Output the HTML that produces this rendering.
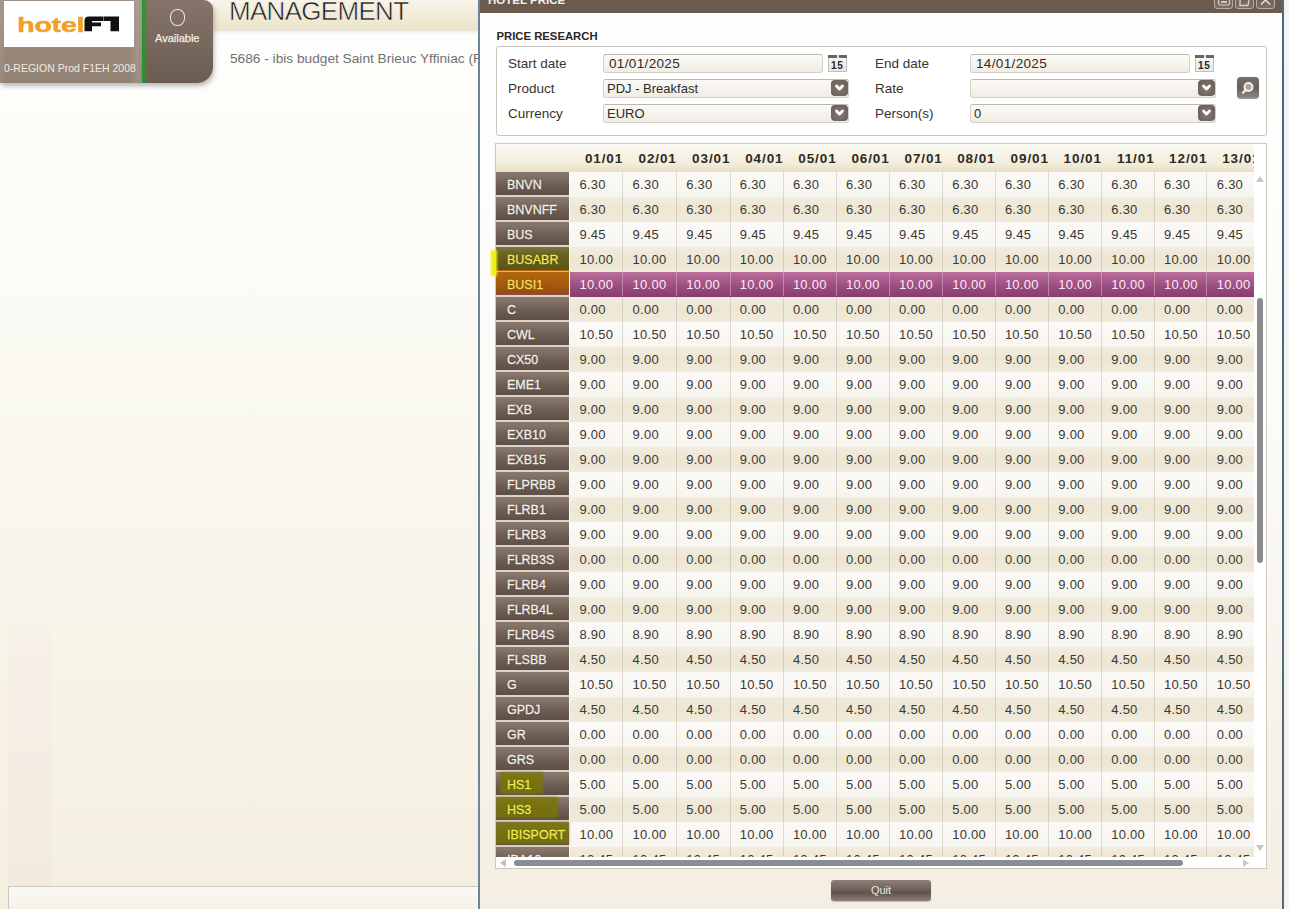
<!DOCTYPE html><html><head><meta charset="utf-8"><style>
*{margin:0;padding:0;box-sizing:border-box}
html,body{width:1289px;height:909px;overflow:hidden}
body{position:relative;font-family:"Liberation Sans",sans-serif;background:linear-gradient(#fefefd 0px,#fbfaf4 300px,#f4efdf 909px);}
.a{position:absolute}
.t{position:absolute;white-space:nowrap;line-height:1}
</style></head><body><div class="a" style="left:213px;top:0;width:266px;height:29px;background:linear-gradient(#f7f4ea,#ece4c9);box-shadow:0 2px 4px rgba(120,100,60,.25)"></div><div class="t" style="left:229px;top:-2px;font-size:26px;color:#1e1b18;letter-spacing:-0.7px;-webkit-text-stroke:0.55px #f4f0e2;font-weight:normal">MANAGEMENT</div><div class="t" style="left:230px;top:51.5px;font-size:13.7px;color:#737170">5686 - ibis budget Saint Brieuc Yffiniac (F</div><div class="a" style="left:0;top:0;width:213px;height:83px;box-shadow:1px 3px 5px rgba(0,0,0,.28);border-radius:0 9px 16px 0"></div><div class="a" style="left:0;top:0;width:142px;height:83px;background:linear-gradient(#a09184,#928274)"></div><div class="a" style="left:0;top:0;width:142px;height:83px;background:linear-gradient(90deg,rgba(255,255,255,.08),rgba(255,255,255,0) 6px,rgba(255,255,255,0) 130px,rgba(255,255,255,.12) 138px,rgba(255,255,255,.05))"></div><div class="a" style="left:4px;top:1px;width:130px;height:46px;background:#fff"></div><div class="t" style="left:17px;top:13.5px;font-size:21px;font-weight:bold;color:#f0a028;-webkit-text-stroke:0.5px #f0a028;transform:scaleX(1.38);transform-origin:0 0;letter-spacing:-0.3px">hotel</div><svg class="a" style="left:0;top:0" width="140" height="48"><path d="M84.5 31.3 L84.5 20.5 Q84.5 16.4 89 16.4 L103.6 16.4 L103.6 21 L92 21 L92 22.6 L101 22.6 L101 26.2 L92 26.2 L92 31.3 Z" fill="#111"/><path d="M104 16.4 L119 16.4 L119 31.3 L110.5 31.3 L110.5 21 L104 21 Z" fill="#111"/></svg><div class="t" style="left:4px;top:63px;font-size:10.5px;color:#f2ebe2">0-REGION Prod F1EH 2008</div><div class="a" style="left:142px;top:0;width:71px;height:83px;background:linear-gradient(#857469,#6b5c52);border-radius:0 9px 16px 0"></div><div class="a" style="left:142px;top:0;width:6px;height:83px;background:linear-gradient(90deg,#1f9a2a,rgba(40,150,40,0.4) 70%,rgba(0,0,0,0))"></div><div class="a" style="left:170px;top:9px;width:14.5px;height:16.5px;border:1.5px solid #f0e8e0;border-radius:48%/45%"></div><div class="t" style="left:155px;top:33px;font-size:11px;color:#f4eee6;-webkit-text-stroke:0.25px #f4eee6">Available</div><div class="a" style="left:8px;top:615px;width:43px;height:271px;background:linear-gradient(rgba(240,215,220,0),rgba(240,215,220,.15) 40px,rgba(240,215,220,.2))"></div><div class="a" style="left:8px;top:886px;width:471px;height:30px;border:1px solid #cfc8bc;background:linear-gradient(#fbf9f4,#f4f0e6)"></div><div class="a" style="left:1284px;top:0;width:5px;height:909px;background:linear-gradient(90deg,#eef4f0,#f6f4f2)"></div><div class="a" style="left:478px;top:0;width:806px;height:909px;border-left:2px solid #6f8299;border-right:2px solid #56667f;background:linear-gradient(#fefefe 0px,#fcfbf8 400px,#f4eee2 909px)"></div><div class="a" style="left:480px;top:0;width:802px;height:12.5px;background:#6b5b4f"></div><div class="t" style="left:488px;top:-5.5px;font-size:11.5px;font-weight:bold;color:#f4efe8">HOTEL PRICE</div><div class="a" style="left:1214px;top:-6px;width:19px;height:15px;border:1px solid #b8aca0;border-radius:3px;background:linear-gradient(rgba(255,255,255,.03),rgba(255,255,255,.12))"></div><div class="a" style="left:1235px;top:-6px;width:19px;height:15px;border:1px solid #b8aca0;border-radius:3px;background:linear-gradient(rgba(255,255,255,.03),rgba(255,255,255,.12))"></div><div class="a" style="left:1256px;top:-6px;width:19px;height:15px;border:1px solid #b8aca0;border-radius:3px;background:linear-gradient(rgba(255,255,255,.03),rgba(255,255,255,.12))"></div><svg class="a" style="left:1210px;top:0" width="70" height="12"><rect x="8.5" y="-4" width="11" height="9" rx="2" stroke="#d8cec4" stroke-width="1.2" fill="none"/><path d="M11 2 H17" stroke="#e8e0d8" stroke-width="1.6"/><path d="M30 -2 V5.5 H38 L39 0" stroke="#d8cec4" stroke-width="1.4" fill="none"/><path d="M51 -4.5 L60 4.5 M60 -4.5 L51 4.5" stroke="#e8e0d8" stroke-width="1.5" fill="none"/></svg><div class="t" style="left:496.5px;top:31.3px;font-size:11.3px;font-weight:bold;color:#2b2825">PRICE RESEARCH</div><div class="a" style="left:495.5px;top:45.5px;width:771px;height:90px;border:1px solid #c9c5bd;border-radius:3px;background:#fff"></div><div class="t" style="left:508px;top:57px;font-size:13.5px;color:#38332e">Start date</div><div class="a" style="left:603px;top:53.5px;width:220px;height:19px;border:1px solid #d6d1c8;border-top-color:#bdb7ae;border-radius:3px;background:linear-gradient(#fbfaf6,#f0ede4)"></div><div class="t" style="left:609px;top:56.5px;font-size:13.5px;letter-spacing:0.35px;color:#2f2b27">01/01/2025</div><div class="a" style="left:828px;top:55px;width:19px;height:17px;border:1px solid #c4c0ba;border-top:none;background:linear-gradient(#fafafa,#e6e6e4)"><div class="a" style="left:-1px;top:0;width:19px;height:3px;background:#6a6560"></div><div class="a" style="left:8px;top:0;width:2px;height:3px;background:#e8e4e0"></div><div class="t" style="left:2px;top:6px;font-size:10px;letter-spacing:0.8px;font-weight:bold;color:#2a2a2a">15</div></div><div class="t" style="left:508px;top:82px;font-size:13.5px;color:#38332e">Product</div><div class="a" style="left:603px;top:78.5px;width:246px;height:19px;border:1px solid #d6d1c8;border-top-color:#bdb7ae;border-radius:3px;background:linear-gradient(#fbfaf6,#f0ede4)"></div><div class="t" style="left:607px;top:81.5px;font-size:13px;color:#2f2b27">PDJ - Breakfast</div><div class="a" style="left:831px;top:80.2px;width:17px;height:15.7px;border-radius:4px;background:radial-gradient(ellipse at 50% 55%,#857b73,#6b625c 75%,#5e5650)"><svg width="17" height="15" style="position:absolute;left:0;top:0"><path d="M5.5 6 L8.5 9 L11.5 6" stroke="#fff" stroke-width="2.8" fill="none" stroke-linecap="round" stroke-linejoin="round"/></svg></div><div class="t" style="left:508px;top:107px;font-size:13.5px;color:#38332e">Currency</div><div class="a" style="left:603px;top:103.5px;width:246px;height:19px;border:1px solid #d6d1c8;border-top-color:#bdb7ae;border-radius:3px;background:linear-gradient(#fbfaf6,#f0ede4)"></div><div class="t" style="left:607px;top:106.5px;font-size:13px;color:#2f2b27">EURO</div><div class="a" style="left:831px;top:105.2px;width:17px;height:15.7px;border-radius:4px;background:radial-gradient(ellipse at 50% 55%,#857b73,#6b625c 75%,#5e5650)"><svg width="17" height="15" style="position:absolute;left:0;top:0"><path d="M5.5 6 L8.5 9 L11.5 6" stroke="#fff" stroke-width="2.8" fill="none" stroke-linecap="round" stroke-linejoin="round"/></svg></div><div class="t" style="left:875px;top:57px;font-size:13.5px;color:#38332e">End date</div><div class="a" style="left:970px;top:53.5px;width:220px;height:19px;border:1px solid #d6d1c8;border-top-color:#bdb7ae;border-radius:3px;background:linear-gradient(#fbfaf6,#f0ede4)"></div><div class="t" style="left:976px;top:56.5px;font-size:13.5px;letter-spacing:0.35px;color:#2f2b27">14/01/2025</div><div class="a" style="left:1195px;top:55px;width:19px;height:17px;border:1px solid #c4c0ba;border-top:none;background:linear-gradient(#fafafa,#e6e6e4)"><div class="a" style="left:-1px;top:0;width:19px;height:3px;background:#6a6560"></div><div class="a" style="left:8px;top:0;width:2px;height:3px;background:#e8e4e0"></div><div class="t" style="left:2px;top:6px;font-size:10px;letter-spacing:0.8px;font-weight:bold;color:#2a2a2a">15</div></div><div class="t" style="left:875px;top:82px;font-size:13.5px;color:#38332e">Rate</div><div class="a" style="left:970px;top:78.5px;width:246px;height:19px;border:1px solid #d6d1c8;border-top-color:#bdb7ae;border-radius:3px;background:linear-gradient(#fbfaf6,#f0ede4)"></div><div class="a" style="left:1198px;top:80.2px;width:17px;height:15.7px;border-radius:4px;background:radial-gradient(ellipse at 50% 55%,#857b73,#6b625c 75%,#5e5650)"><svg width="17" height="15" style="position:absolute;left:0;top:0"><path d="M5.5 6 L8.5 9 L11.5 6" stroke="#fff" stroke-width="2.8" fill="none" stroke-linecap="round" stroke-linejoin="round"/></svg></div><div class="t" style="left:875px;top:107px;font-size:13.5px;color:#38332e">Person(s)</div><div class="a" style="left:970px;top:103.5px;width:246px;height:19px;border:1px solid #d6d1c8;border-top-color:#bdb7ae;border-radius:3px;background:linear-gradient(#fbfaf6,#f0ede4)"></div><div class="t" style="left:974px;top:106.5px;font-size:13px;color:#2f2b27">0</div><div class="a" style="left:1198px;top:105.2px;width:17px;height:15.7px;border-radius:4px;background:radial-gradient(ellipse at 50% 55%,#857b73,#6b625c 75%,#5e5650)"><svg width="17" height="15" style="position:absolute;left:0;top:0"><path d="M5.5 6 L8.5 9 L11.5 6" stroke="#fff" stroke-width="2.8" fill="none" stroke-linecap="round" stroke-linejoin="round"/></svg></div><div class="a" style="left:1237px;top:77px;width:22px;height:22px;border-radius:4px;background:linear-gradient(#77706a,#6a625c 50%,#8a8078 90%,#a89e94);box-shadow:0 0 1px rgba(0,0,0,.3)"><svg width="22" height="22" style="position:absolute;left:0;top:0"><circle cx="11.5" cy="10" r="4" stroke="#f4f0ec" stroke-width="2" fill="#a8a2a4"/><path d="M8.8 12.8 L6 15.8" stroke="#f4f0ec" stroke-width="2.2" stroke-linecap="round"/></svg></div><div class="a" style="left:495px;top:143px;width:772px;height:726px;border:1px solid #cdc9c1;background:#fff;overflow:hidden"><div class="a" style="left:0;top:0;width:758px;height:713px;overflow:hidden"><div class="a" style="left:0;top:0;width:758px;height:28px;background:linear-gradient(#fbfaf3,#f3eedd 65%,#e8dfc4)"></div><div class="t" style="left:67.2px;top:8px;width:60px;text-align:right;font-size:13.5px;letter-spacing:0.9px;font-weight:bold;color:#2f2a25">01/01</div><div class="t" style="left:120.8px;top:8px;width:60px;text-align:right;font-size:13.5px;letter-spacing:0.9px;font-weight:bold;color:#2f2a25">02/01</div><div class="t" style="left:174.4px;top:8px;width:60px;text-align:right;font-size:13.5px;letter-spacing:0.9px;font-weight:bold;color:#2f2a25">03/01</div><div class="t" style="left:227.5px;top:8px;width:60px;text-align:right;font-size:13.5px;letter-spacing:0.9px;font-weight:bold;color:#2f2a25">04/01</div><div class="t" style="left:280.6px;top:8px;width:60px;text-align:right;font-size:13.5px;letter-spacing:0.9px;font-weight:bold;color:#2f2a25">05/01</div><div class="t" style="left:333.7px;top:8px;width:60px;text-align:right;font-size:13.5px;letter-spacing:0.9px;font-weight:bold;color:#2f2a25">06/01</div><div class="t" style="left:386.8px;top:8px;width:60px;text-align:right;font-size:13.5px;letter-spacing:0.9px;font-weight:bold;color:#2f2a25">07/01</div><div class="t" style="left:439.5px;top:8px;width:60px;text-align:right;font-size:13.5px;letter-spacing:0.9px;font-weight:bold;color:#2f2a25">08/01</div><div class="t" style="left:492.9px;top:8px;width:60px;text-align:right;font-size:13.5px;letter-spacing:0.9px;font-weight:bold;color:#2f2a25">09/01</div><div class="t" style="left:545.9px;top:8px;width:60px;text-align:right;font-size:13.5px;letter-spacing:0.9px;font-weight:bold;color:#2f2a25">10/01</div><div class="t" style="left:598.6px;top:8px;width:60px;text-align:right;font-size:13.5px;letter-spacing:0.9px;font-weight:bold;color:#2f2a25">11/01</div><div class="t" style="left:651.4px;top:8px;width:60px;text-align:right;font-size:13.5px;letter-spacing:0.9px;font-weight:bold;color:#2f2a25">12/01</div><div class="t" style="left:704.5px;top:8px;width:60px;text-align:right;font-size:13.5px;letter-spacing:0.9px;font-weight:bold;color:#2f2a25">13/01</div><div class="a" style="left:0;top:28px;width:73px;height:720px;background:#ddd3c8"></div><div class="a" style="left:74px;top:28px;width:684px;height:25px;background:linear-gradient(#fbfaf7,#f7f5ef)"></div><div class="a" style="left:0;top:28px;width:73px;height:23px;background:linear-gradient(#8a7a6e,#6e5f55 55%,#5d4f46)"></div><div class="t" style="left:11px;top:34.5px;font-size:12.5px;color:#f4efe9;-webkit-text-stroke:0.3px #f4efe9;text-shadow:0 0 2px rgba(0,0,0,.45)">BNVN</div><div class="t" style="left:83.5px;top:34px;font-size:13px;letter-spacing:0.25px;color:#3c3732">6.30</div><div class="t" style="left:136.6px;top:34px;font-size:13px;letter-spacing:0.25px;color:#3c3732">6.30</div><div class="t" style="left:190.2px;top:34px;font-size:13px;letter-spacing:0.25px;color:#3c3732">6.30</div><div class="t" style="left:243.8px;top:34px;font-size:13px;letter-spacing:0.25px;color:#3c3732">6.30</div><div class="t" style="left:296.9px;top:34px;font-size:13px;letter-spacing:0.25px;color:#3c3732">6.30</div><div class="t" style="left:350.0px;top:34px;font-size:13px;letter-spacing:0.25px;color:#3c3732">6.30</div><div class="t" style="left:403.1px;top:34px;font-size:13px;letter-spacing:0.25px;color:#3c3732">6.30</div><div class="t" style="left:456.2px;top:34px;font-size:13px;letter-spacing:0.25px;color:#3c3732">6.30</div><div class="t" style="left:508.9px;top:34px;font-size:13px;letter-spacing:0.25px;color:#3c3732">6.30</div><div class="t" style="left:562.3px;top:34px;font-size:13px;letter-spacing:0.25px;color:#3c3732">6.30</div><div class="t" style="left:615.3px;top:34px;font-size:13px;letter-spacing:0.25px;color:#3c3732">6.30</div><div class="t" style="left:668.0px;top:34px;font-size:13px;letter-spacing:0.25px;color:#3c3732">6.30</div><div class="t" style="left:720.8px;top:34px;font-size:13px;letter-spacing:0.25px;color:#3c3732">6.30</div><div class="a" style="left:74px;top:53px;width:684px;height:25px;background:linear-gradient(#f1ecdf,#ede6d3 50%,#f0ebdd)"></div><div class="a" style="left:0;top:53px;width:73px;height:23px;background:linear-gradient(#8a7a6e,#6e5f55 55%,#5d4f46)"></div><div class="t" style="left:11px;top:59.5px;font-size:12.5px;color:#f4efe9;-webkit-text-stroke:0.3px #f4efe9;text-shadow:0 0 2px rgba(0,0,0,.45)">BNVNFF</div><div class="t" style="left:83.5px;top:59px;font-size:13px;letter-spacing:0.25px;color:#3c3732">6.30</div><div class="t" style="left:136.6px;top:59px;font-size:13px;letter-spacing:0.25px;color:#3c3732">6.30</div><div class="t" style="left:190.2px;top:59px;font-size:13px;letter-spacing:0.25px;color:#3c3732">6.30</div><div class="t" style="left:243.8px;top:59px;font-size:13px;letter-spacing:0.25px;color:#3c3732">6.30</div><div class="t" style="left:296.9px;top:59px;font-size:13px;letter-spacing:0.25px;color:#3c3732">6.30</div><div class="t" style="left:350.0px;top:59px;font-size:13px;letter-spacing:0.25px;color:#3c3732">6.30</div><div class="t" style="left:403.1px;top:59px;font-size:13px;letter-spacing:0.25px;color:#3c3732">6.30</div><div class="t" style="left:456.2px;top:59px;font-size:13px;letter-spacing:0.25px;color:#3c3732">6.30</div><div class="t" style="left:508.9px;top:59px;font-size:13px;letter-spacing:0.25px;color:#3c3732">6.30</div><div class="t" style="left:562.3px;top:59px;font-size:13px;letter-spacing:0.25px;color:#3c3732">6.30</div><div class="t" style="left:615.3px;top:59px;font-size:13px;letter-spacing:0.25px;color:#3c3732">6.30</div><div class="t" style="left:668.0px;top:59px;font-size:13px;letter-spacing:0.25px;color:#3c3732">6.30</div><div class="t" style="left:720.8px;top:59px;font-size:13px;letter-spacing:0.25px;color:#3c3732">6.30</div><div class="a" style="left:74px;top:78px;width:684px;height:25px;background:linear-gradient(#fbfaf7,#f7f5ef)"></div><div class="a" style="left:0;top:78px;width:73px;height:23px;background:linear-gradient(#8a7a6e,#6e5f55 55%,#5d4f46)"></div><div class="t" style="left:11px;top:84.5px;font-size:12.5px;color:#f4efe9;-webkit-text-stroke:0.3px #f4efe9;text-shadow:0 0 2px rgba(0,0,0,.45)">BUS</div><div class="t" style="left:83.5px;top:84px;font-size:13px;letter-spacing:0.25px;color:#3c3732">9.45</div><div class="t" style="left:136.6px;top:84px;font-size:13px;letter-spacing:0.25px;color:#3c3732">9.45</div><div class="t" style="left:190.2px;top:84px;font-size:13px;letter-spacing:0.25px;color:#3c3732">9.45</div><div class="t" style="left:243.8px;top:84px;font-size:13px;letter-spacing:0.25px;color:#3c3732">9.45</div><div class="t" style="left:296.9px;top:84px;font-size:13px;letter-spacing:0.25px;color:#3c3732">9.45</div><div class="t" style="left:350.0px;top:84px;font-size:13px;letter-spacing:0.25px;color:#3c3732">9.45</div><div class="t" style="left:403.1px;top:84px;font-size:13px;letter-spacing:0.25px;color:#3c3732">9.45</div><div class="t" style="left:456.2px;top:84px;font-size:13px;letter-spacing:0.25px;color:#3c3732">9.45</div><div class="t" style="left:508.9px;top:84px;font-size:13px;letter-spacing:0.25px;color:#3c3732">9.45</div><div class="t" style="left:562.3px;top:84px;font-size:13px;letter-spacing:0.25px;color:#3c3732">9.45</div><div class="t" style="left:615.3px;top:84px;font-size:13px;letter-spacing:0.25px;color:#3c3732">9.45</div><div class="t" style="left:668.0px;top:84px;font-size:13px;letter-spacing:0.25px;color:#3c3732">9.45</div><div class="t" style="left:720.8px;top:84px;font-size:13px;letter-spacing:0.25px;color:#3c3732">9.45</div><div class="a" style="left:74px;top:103px;width:684px;height:25px;background:linear-gradient(#f1ecdf,#ede6d3 50%,#f0ebdd)"></div><div class="a" style="left:0;top:103px;width:73px;height:23px;background:linear-gradient(#7c7440,#6a6220 30%,#5c5414)"></div><div class="t" style="left:11px;top:109.5px;font-size:12.5px;color:#f0e858;-webkit-text-stroke:0.3px #f0e858;text-shadow:0 0 2px rgba(0,0,0,.45)">BUSABR</div><div class="t" style="left:83.5px;top:109px;font-size:13px;letter-spacing:0.25px;color:#3c3732">10.00</div><div class="t" style="left:136.6px;top:109px;font-size:13px;letter-spacing:0.25px;color:#3c3732">10.00</div><div class="t" style="left:190.2px;top:109px;font-size:13px;letter-spacing:0.25px;color:#3c3732">10.00</div><div class="t" style="left:243.8px;top:109px;font-size:13px;letter-spacing:0.25px;color:#3c3732">10.00</div><div class="t" style="left:296.9px;top:109px;font-size:13px;letter-spacing:0.25px;color:#3c3732">10.00</div><div class="t" style="left:350.0px;top:109px;font-size:13px;letter-spacing:0.25px;color:#3c3732">10.00</div><div class="t" style="left:403.1px;top:109px;font-size:13px;letter-spacing:0.25px;color:#3c3732">10.00</div><div class="t" style="left:456.2px;top:109px;font-size:13px;letter-spacing:0.25px;color:#3c3732">10.00</div><div class="t" style="left:508.9px;top:109px;font-size:13px;letter-spacing:0.25px;color:#3c3732">10.00</div><div class="t" style="left:562.3px;top:109px;font-size:13px;letter-spacing:0.25px;color:#3c3732">10.00</div><div class="t" style="left:615.3px;top:109px;font-size:13px;letter-spacing:0.25px;color:#3c3732">10.00</div><div class="t" style="left:668.0px;top:109px;font-size:13px;letter-spacing:0.25px;color:#3c3732">10.00</div><div class="t" style="left:720.8px;top:109px;font-size:13px;letter-spacing:0.25px;color:#3c3732">10.00</div><div class="a" style="left:74px;top:128px;width:684px;height:25px;background:linear-gradient(#bb6d9c,#9a4c80 60%,#873b6e)"></div><div class="a" style="left:0;top:126px;width:73px;height:25px;background:linear-gradient(#b4680e,#a65a0c 55%,#984c16 90%,#8a4a50)"></div><div class="a" style="left:0;top:126.5px;width:74px;height:1px;background:#d8c840"></div><div class="a" style="left:126px;top:128px;width:1px;height:24px;background:rgba(255,210,240,.45)"></div><div class="a" style="left:180px;top:128px;width:1px;height:24px;background:rgba(255,210,240,.45)"></div><div class="a" style="left:234px;top:128px;width:1px;height:24px;background:rgba(255,210,240,.45)"></div><div class="a" style="left:287px;top:128px;width:1px;height:24px;background:rgba(255,210,240,.45)"></div><div class="a" style="left:340px;top:128px;width:1px;height:24px;background:rgba(255,210,240,.45)"></div><div class="a" style="left:393px;top:128px;width:1px;height:24px;background:rgba(255,210,240,.45)"></div><div class="a" style="left:446px;top:128px;width:1px;height:24px;background:rgba(255,210,240,.45)"></div><div class="a" style="left:499px;top:128px;width:1px;height:24px;background:rgba(255,210,240,.45)"></div><div class="a" style="left:552px;top:128px;width:1px;height:24px;background:rgba(255,210,240,.45)"></div><div class="a" style="left:605px;top:128px;width:1px;height:24px;background:rgba(255,210,240,.45)"></div><div class="a" style="left:658px;top:128px;width:1px;height:24px;background:rgba(255,210,240,.45)"></div><div class="a" style="left:710px;top:128px;width:1px;height:24px;background:rgba(255,210,240,.45)"></div><div class="a" style="left:764px;top:128px;width:1px;height:24px;background:rgba(255,210,240,.45)"></div><div class="t" style="left:11px;top:134.5px;font-size:12.5px;color:#f4e05a;-webkit-text-stroke:0.3px #f4e05a;text-shadow:0 0 2px rgba(0,0,0,.45)">BUSI1</div><div class="t" style="left:83.5px;top:134px;font-size:13px;letter-spacing:0.25px;color:#fbeaf4">10.00</div><div class="t" style="left:136.6px;top:134px;font-size:13px;letter-spacing:0.25px;color:#fbeaf4">10.00</div><div class="t" style="left:190.2px;top:134px;font-size:13px;letter-spacing:0.25px;color:#fbeaf4">10.00</div><div class="t" style="left:243.8px;top:134px;font-size:13px;letter-spacing:0.25px;color:#fbeaf4">10.00</div><div class="t" style="left:296.9px;top:134px;font-size:13px;letter-spacing:0.25px;color:#fbeaf4">10.00</div><div class="t" style="left:350.0px;top:134px;font-size:13px;letter-spacing:0.25px;color:#fbeaf4">10.00</div><div class="t" style="left:403.1px;top:134px;font-size:13px;letter-spacing:0.25px;color:#fbeaf4">10.00</div><div class="t" style="left:456.2px;top:134px;font-size:13px;letter-spacing:0.25px;color:#fbeaf4">10.00</div><div class="t" style="left:508.9px;top:134px;font-size:13px;letter-spacing:0.25px;color:#fbeaf4">10.00</div><div class="t" style="left:562.3px;top:134px;font-size:13px;letter-spacing:0.25px;color:#fbeaf4">10.00</div><div class="t" style="left:615.3px;top:134px;font-size:13px;letter-spacing:0.25px;color:#fbeaf4">10.00</div><div class="t" style="left:668.0px;top:134px;font-size:13px;letter-spacing:0.25px;color:#fbeaf4">10.00</div><div class="t" style="left:720.8px;top:134px;font-size:13px;letter-spacing:0.25px;color:#fbeaf4">10.00</div><div class="a" style="left:74px;top:153px;width:684px;height:25px;background:linear-gradient(#f1ecdf,#ede6d3 50%,#f0ebdd)"></div><div class="a" style="left:0;top:153px;width:73px;height:23px;background:linear-gradient(#8a7a6e,#6e5f55 55%,#5d4f46)"></div><div class="t" style="left:11px;top:159.5px;font-size:12.5px;color:#f4efe9;-webkit-text-stroke:0.3px #f4efe9;text-shadow:0 0 2px rgba(0,0,0,.45)">C</div><div class="t" style="left:83.5px;top:159px;font-size:13px;letter-spacing:0.25px;color:#3c3732">0.00</div><div class="t" style="left:136.6px;top:159px;font-size:13px;letter-spacing:0.25px;color:#3c3732">0.00</div><div class="t" style="left:190.2px;top:159px;font-size:13px;letter-spacing:0.25px;color:#3c3732">0.00</div><div class="t" style="left:243.8px;top:159px;font-size:13px;letter-spacing:0.25px;color:#3c3732">0.00</div><div class="t" style="left:296.9px;top:159px;font-size:13px;letter-spacing:0.25px;color:#3c3732">0.00</div><div class="t" style="left:350.0px;top:159px;font-size:13px;letter-spacing:0.25px;color:#3c3732">0.00</div><div class="t" style="left:403.1px;top:159px;font-size:13px;letter-spacing:0.25px;color:#3c3732">0.00</div><div class="t" style="left:456.2px;top:159px;font-size:13px;letter-spacing:0.25px;color:#3c3732">0.00</div><div class="t" style="left:508.9px;top:159px;font-size:13px;letter-spacing:0.25px;color:#3c3732">0.00</div><div class="t" style="left:562.3px;top:159px;font-size:13px;letter-spacing:0.25px;color:#3c3732">0.00</div><div class="t" style="left:615.3px;top:159px;font-size:13px;letter-spacing:0.25px;color:#3c3732">0.00</div><div class="t" style="left:668.0px;top:159px;font-size:13px;letter-spacing:0.25px;color:#3c3732">0.00</div><div class="t" style="left:720.8px;top:159px;font-size:13px;letter-spacing:0.25px;color:#3c3732">0.00</div><div class="a" style="left:74px;top:178px;width:684px;height:25px;background:linear-gradient(#fbfaf7,#f7f5ef)"></div><div class="a" style="left:0;top:178px;width:73px;height:23px;background:linear-gradient(#8a7a6e,#6e5f55 55%,#5d4f46)"></div><div class="t" style="left:11px;top:184.5px;font-size:12.5px;color:#f4efe9;-webkit-text-stroke:0.3px #f4efe9;text-shadow:0 0 2px rgba(0,0,0,.45)">CWL</div><div class="t" style="left:83.5px;top:184px;font-size:13px;letter-spacing:0.25px;color:#3c3732">10.50</div><div class="t" style="left:136.6px;top:184px;font-size:13px;letter-spacing:0.25px;color:#3c3732">10.50</div><div class="t" style="left:190.2px;top:184px;font-size:13px;letter-spacing:0.25px;color:#3c3732">10.50</div><div class="t" style="left:243.8px;top:184px;font-size:13px;letter-spacing:0.25px;color:#3c3732">10.50</div><div class="t" style="left:296.9px;top:184px;font-size:13px;letter-spacing:0.25px;color:#3c3732">10.50</div><div class="t" style="left:350.0px;top:184px;font-size:13px;letter-spacing:0.25px;color:#3c3732">10.50</div><div class="t" style="left:403.1px;top:184px;font-size:13px;letter-spacing:0.25px;color:#3c3732">10.50</div><div class="t" style="left:456.2px;top:184px;font-size:13px;letter-spacing:0.25px;color:#3c3732">10.50</div><div class="t" style="left:508.9px;top:184px;font-size:13px;letter-spacing:0.25px;color:#3c3732">10.50</div><div class="t" style="left:562.3px;top:184px;font-size:13px;letter-spacing:0.25px;color:#3c3732">10.50</div><div class="t" style="left:615.3px;top:184px;font-size:13px;letter-spacing:0.25px;color:#3c3732">10.50</div><div class="t" style="left:668.0px;top:184px;font-size:13px;letter-spacing:0.25px;color:#3c3732">10.50</div><div class="t" style="left:720.8px;top:184px;font-size:13px;letter-spacing:0.25px;color:#3c3732">10.50</div><div class="a" style="left:74px;top:203px;width:684px;height:25px;background:linear-gradient(#f1ecdf,#ede6d3 50%,#f0ebdd)"></div><div class="a" style="left:0;top:203px;width:73px;height:23px;background:linear-gradient(#8a7a6e,#6e5f55 55%,#5d4f46)"></div><div class="t" style="left:11px;top:209.5px;font-size:12.5px;color:#f4efe9;-webkit-text-stroke:0.3px #f4efe9;text-shadow:0 0 2px rgba(0,0,0,.45)">CX50</div><div class="t" style="left:83.5px;top:209px;font-size:13px;letter-spacing:0.25px;color:#3c3732">9.00</div><div class="t" style="left:136.6px;top:209px;font-size:13px;letter-spacing:0.25px;color:#3c3732">9.00</div><div class="t" style="left:190.2px;top:209px;font-size:13px;letter-spacing:0.25px;color:#3c3732">9.00</div><div class="t" style="left:243.8px;top:209px;font-size:13px;letter-spacing:0.25px;color:#3c3732">9.00</div><div class="t" style="left:296.9px;top:209px;font-size:13px;letter-spacing:0.25px;color:#3c3732">9.00</div><div class="t" style="left:350.0px;top:209px;font-size:13px;letter-spacing:0.25px;color:#3c3732">9.00</div><div class="t" style="left:403.1px;top:209px;font-size:13px;letter-spacing:0.25px;color:#3c3732">9.00</div><div class="t" style="left:456.2px;top:209px;font-size:13px;letter-spacing:0.25px;color:#3c3732">9.00</div><div class="t" style="left:508.9px;top:209px;font-size:13px;letter-spacing:0.25px;color:#3c3732">9.00</div><div class="t" style="left:562.3px;top:209px;font-size:13px;letter-spacing:0.25px;color:#3c3732">9.00</div><div class="t" style="left:615.3px;top:209px;font-size:13px;letter-spacing:0.25px;color:#3c3732">9.00</div><div class="t" style="left:668.0px;top:209px;font-size:13px;letter-spacing:0.25px;color:#3c3732">9.00</div><div class="t" style="left:720.8px;top:209px;font-size:13px;letter-spacing:0.25px;color:#3c3732">9.00</div><div class="a" style="left:74px;top:228px;width:684px;height:25px;background:linear-gradient(#fbfaf7,#f7f5ef)"></div><div class="a" style="left:0;top:228px;width:73px;height:23px;background:linear-gradient(#8a7a6e,#6e5f55 55%,#5d4f46)"></div><div class="t" style="left:11px;top:234.5px;font-size:12.5px;color:#f4efe9;-webkit-text-stroke:0.3px #f4efe9;text-shadow:0 0 2px rgba(0,0,0,.45)">EME1</div><div class="t" style="left:83.5px;top:234px;font-size:13px;letter-spacing:0.25px;color:#3c3732">9.00</div><div class="t" style="left:136.6px;top:234px;font-size:13px;letter-spacing:0.25px;color:#3c3732">9.00</div><div class="t" style="left:190.2px;top:234px;font-size:13px;letter-spacing:0.25px;color:#3c3732">9.00</div><div class="t" style="left:243.8px;top:234px;font-size:13px;letter-spacing:0.25px;color:#3c3732">9.00</div><div class="t" style="left:296.9px;top:234px;font-size:13px;letter-spacing:0.25px;color:#3c3732">9.00</div><div class="t" style="left:350.0px;top:234px;font-size:13px;letter-spacing:0.25px;color:#3c3732">9.00</div><div class="t" style="left:403.1px;top:234px;font-size:13px;letter-spacing:0.25px;color:#3c3732">9.00</div><div class="t" style="left:456.2px;top:234px;font-size:13px;letter-spacing:0.25px;color:#3c3732">9.00</div><div class="t" style="left:508.9px;top:234px;font-size:13px;letter-spacing:0.25px;color:#3c3732">9.00</div><div class="t" style="left:562.3px;top:234px;font-size:13px;letter-spacing:0.25px;color:#3c3732">9.00</div><div class="t" style="left:615.3px;top:234px;font-size:13px;letter-spacing:0.25px;color:#3c3732">9.00</div><div class="t" style="left:668.0px;top:234px;font-size:13px;letter-spacing:0.25px;color:#3c3732">9.00</div><div class="t" style="left:720.8px;top:234px;font-size:13px;letter-spacing:0.25px;color:#3c3732">9.00</div><div class="a" style="left:74px;top:253px;width:684px;height:25px;background:linear-gradient(#f1ecdf,#ede6d3 50%,#f0ebdd)"></div><div class="a" style="left:0;top:253px;width:73px;height:23px;background:linear-gradient(#8a7a6e,#6e5f55 55%,#5d4f46)"></div><div class="t" style="left:11px;top:259.5px;font-size:12.5px;color:#f4efe9;-webkit-text-stroke:0.3px #f4efe9;text-shadow:0 0 2px rgba(0,0,0,.45)">EXB</div><div class="t" style="left:83.5px;top:259px;font-size:13px;letter-spacing:0.25px;color:#3c3732">9.00</div><div class="t" style="left:136.6px;top:259px;font-size:13px;letter-spacing:0.25px;color:#3c3732">9.00</div><div class="t" style="left:190.2px;top:259px;font-size:13px;letter-spacing:0.25px;color:#3c3732">9.00</div><div class="t" style="left:243.8px;top:259px;font-size:13px;letter-spacing:0.25px;color:#3c3732">9.00</div><div class="t" style="left:296.9px;top:259px;font-size:13px;letter-spacing:0.25px;color:#3c3732">9.00</div><div class="t" style="left:350.0px;top:259px;font-size:13px;letter-spacing:0.25px;color:#3c3732">9.00</div><div class="t" style="left:403.1px;top:259px;font-size:13px;letter-spacing:0.25px;color:#3c3732">9.00</div><div class="t" style="left:456.2px;top:259px;font-size:13px;letter-spacing:0.25px;color:#3c3732">9.00</div><div class="t" style="left:508.9px;top:259px;font-size:13px;letter-spacing:0.25px;color:#3c3732">9.00</div><div class="t" style="left:562.3px;top:259px;font-size:13px;letter-spacing:0.25px;color:#3c3732">9.00</div><div class="t" style="left:615.3px;top:259px;font-size:13px;letter-spacing:0.25px;color:#3c3732">9.00</div><div class="t" style="left:668.0px;top:259px;font-size:13px;letter-spacing:0.25px;color:#3c3732">9.00</div><div class="t" style="left:720.8px;top:259px;font-size:13px;letter-spacing:0.25px;color:#3c3732">9.00</div><div class="a" style="left:74px;top:278px;width:684px;height:25px;background:linear-gradient(#fbfaf7,#f7f5ef)"></div><div class="a" style="left:0;top:278px;width:73px;height:23px;background:linear-gradient(#8a7a6e,#6e5f55 55%,#5d4f46)"></div><div class="t" style="left:11px;top:284.5px;font-size:12.5px;color:#f4efe9;-webkit-text-stroke:0.3px #f4efe9;text-shadow:0 0 2px rgba(0,0,0,.45)">EXB10</div><div class="t" style="left:83.5px;top:284px;font-size:13px;letter-spacing:0.25px;color:#3c3732">9.00</div><div class="t" style="left:136.6px;top:284px;font-size:13px;letter-spacing:0.25px;color:#3c3732">9.00</div><div class="t" style="left:190.2px;top:284px;font-size:13px;letter-spacing:0.25px;color:#3c3732">9.00</div><div class="t" style="left:243.8px;top:284px;font-size:13px;letter-spacing:0.25px;color:#3c3732">9.00</div><div class="t" style="left:296.9px;top:284px;font-size:13px;letter-spacing:0.25px;color:#3c3732">9.00</div><div class="t" style="left:350.0px;top:284px;font-size:13px;letter-spacing:0.25px;color:#3c3732">9.00</div><div class="t" style="left:403.1px;top:284px;font-size:13px;letter-spacing:0.25px;color:#3c3732">9.00</div><div class="t" style="left:456.2px;top:284px;font-size:13px;letter-spacing:0.25px;color:#3c3732">9.00</div><div class="t" style="left:508.9px;top:284px;font-size:13px;letter-spacing:0.25px;color:#3c3732">9.00</div><div class="t" style="left:562.3px;top:284px;font-size:13px;letter-spacing:0.25px;color:#3c3732">9.00</div><div class="t" style="left:615.3px;top:284px;font-size:13px;letter-spacing:0.25px;color:#3c3732">9.00</div><div class="t" style="left:668.0px;top:284px;font-size:13px;letter-spacing:0.25px;color:#3c3732">9.00</div><div class="t" style="left:720.8px;top:284px;font-size:13px;letter-spacing:0.25px;color:#3c3732">9.00</div><div class="a" style="left:74px;top:303px;width:684px;height:25px;background:linear-gradient(#f1ecdf,#ede6d3 50%,#f0ebdd)"></div><div class="a" style="left:0;top:303px;width:73px;height:23px;background:linear-gradient(#8a7a6e,#6e5f55 55%,#5d4f46)"></div><div class="t" style="left:11px;top:309.5px;font-size:12.5px;color:#f4efe9;-webkit-text-stroke:0.3px #f4efe9;text-shadow:0 0 2px rgba(0,0,0,.45)">EXB15</div><div class="t" style="left:83.5px;top:309px;font-size:13px;letter-spacing:0.25px;color:#3c3732">9.00</div><div class="t" style="left:136.6px;top:309px;font-size:13px;letter-spacing:0.25px;color:#3c3732">9.00</div><div class="t" style="left:190.2px;top:309px;font-size:13px;letter-spacing:0.25px;color:#3c3732">9.00</div><div class="t" style="left:243.8px;top:309px;font-size:13px;letter-spacing:0.25px;color:#3c3732">9.00</div><div class="t" style="left:296.9px;top:309px;font-size:13px;letter-spacing:0.25px;color:#3c3732">9.00</div><div class="t" style="left:350.0px;top:309px;font-size:13px;letter-spacing:0.25px;color:#3c3732">9.00</div><div class="t" style="left:403.1px;top:309px;font-size:13px;letter-spacing:0.25px;color:#3c3732">9.00</div><div class="t" style="left:456.2px;top:309px;font-size:13px;letter-spacing:0.25px;color:#3c3732">9.00</div><div class="t" style="left:508.9px;top:309px;font-size:13px;letter-spacing:0.25px;color:#3c3732">9.00</div><div class="t" style="left:562.3px;top:309px;font-size:13px;letter-spacing:0.25px;color:#3c3732">9.00</div><div class="t" style="left:615.3px;top:309px;font-size:13px;letter-spacing:0.25px;color:#3c3732">9.00</div><div class="t" style="left:668.0px;top:309px;font-size:13px;letter-spacing:0.25px;color:#3c3732">9.00</div><div class="t" style="left:720.8px;top:309px;font-size:13px;letter-spacing:0.25px;color:#3c3732">9.00</div><div class="a" style="left:74px;top:328px;width:684px;height:25px;background:linear-gradient(#fbfaf7,#f7f5ef)"></div><div class="a" style="left:0;top:328px;width:73px;height:23px;background:linear-gradient(#8a7a6e,#6e5f55 55%,#5d4f46)"></div><div class="t" style="left:11px;top:334.5px;font-size:12.5px;color:#f4efe9;-webkit-text-stroke:0.3px #f4efe9;text-shadow:0 0 2px rgba(0,0,0,.45)">FLPRBB</div><div class="t" style="left:83.5px;top:334px;font-size:13px;letter-spacing:0.25px;color:#3c3732">9.00</div><div class="t" style="left:136.6px;top:334px;font-size:13px;letter-spacing:0.25px;color:#3c3732">9.00</div><div class="t" style="left:190.2px;top:334px;font-size:13px;letter-spacing:0.25px;color:#3c3732">9.00</div><div class="t" style="left:243.8px;top:334px;font-size:13px;letter-spacing:0.25px;color:#3c3732">9.00</div><div class="t" style="left:296.9px;top:334px;font-size:13px;letter-spacing:0.25px;color:#3c3732">9.00</div><div class="t" style="left:350.0px;top:334px;font-size:13px;letter-spacing:0.25px;color:#3c3732">9.00</div><div class="t" style="left:403.1px;top:334px;font-size:13px;letter-spacing:0.25px;color:#3c3732">9.00</div><div class="t" style="left:456.2px;top:334px;font-size:13px;letter-spacing:0.25px;color:#3c3732">9.00</div><div class="t" style="left:508.9px;top:334px;font-size:13px;letter-spacing:0.25px;color:#3c3732">9.00</div><div class="t" style="left:562.3px;top:334px;font-size:13px;letter-spacing:0.25px;color:#3c3732">9.00</div><div class="t" style="left:615.3px;top:334px;font-size:13px;letter-spacing:0.25px;color:#3c3732">9.00</div><div class="t" style="left:668.0px;top:334px;font-size:13px;letter-spacing:0.25px;color:#3c3732">9.00</div><div class="t" style="left:720.8px;top:334px;font-size:13px;letter-spacing:0.25px;color:#3c3732">9.00</div><div class="a" style="left:74px;top:353px;width:684px;height:25px;background:linear-gradient(#f1ecdf,#ede6d3 50%,#f0ebdd)"></div><div class="a" style="left:0;top:353px;width:73px;height:23px;background:linear-gradient(#8a7a6e,#6e5f55 55%,#5d4f46)"></div><div class="t" style="left:11px;top:359.5px;font-size:12.5px;color:#f4efe9;-webkit-text-stroke:0.3px #f4efe9;text-shadow:0 0 2px rgba(0,0,0,.45)">FLRB1</div><div class="t" style="left:83.5px;top:359px;font-size:13px;letter-spacing:0.25px;color:#3c3732">9.00</div><div class="t" style="left:136.6px;top:359px;font-size:13px;letter-spacing:0.25px;color:#3c3732">9.00</div><div class="t" style="left:190.2px;top:359px;font-size:13px;letter-spacing:0.25px;color:#3c3732">9.00</div><div class="t" style="left:243.8px;top:359px;font-size:13px;letter-spacing:0.25px;color:#3c3732">9.00</div><div class="t" style="left:296.9px;top:359px;font-size:13px;letter-spacing:0.25px;color:#3c3732">9.00</div><div class="t" style="left:350.0px;top:359px;font-size:13px;letter-spacing:0.25px;color:#3c3732">9.00</div><div class="t" style="left:403.1px;top:359px;font-size:13px;letter-spacing:0.25px;color:#3c3732">9.00</div><div class="t" style="left:456.2px;top:359px;font-size:13px;letter-spacing:0.25px;color:#3c3732">9.00</div><div class="t" style="left:508.9px;top:359px;font-size:13px;letter-spacing:0.25px;color:#3c3732">9.00</div><div class="t" style="left:562.3px;top:359px;font-size:13px;letter-spacing:0.25px;color:#3c3732">9.00</div><div class="t" style="left:615.3px;top:359px;font-size:13px;letter-spacing:0.25px;color:#3c3732">9.00</div><div class="t" style="left:668.0px;top:359px;font-size:13px;letter-spacing:0.25px;color:#3c3732">9.00</div><div class="t" style="left:720.8px;top:359px;font-size:13px;letter-spacing:0.25px;color:#3c3732">9.00</div><div class="a" style="left:74px;top:378px;width:684px;height:25px;background:linear-gradient(#fbfaf7,#f7f5ef)"></div><div class="a" style="left:0;top:378px;width:73px;height:23px;background:linear-gradient(#8a7a6e,#6e5f55 55%,#5d4f46)"></div><div class="t" style="left:11px;top:384.5px;font-size:12.5px;color:#f4efe9;-webkit-text-stroke:0.3px #f4efe9;text-shadow:0 0 2px rgba(0,0,0,.45)">FLRB3</div><div class="t" style="left:83.5px;top:384px;font-size:13px;letter-spacing:0.25px;color:#3c3732">9.00</div><div class="t" style="left:136.6px;top:384px;font-size:13px;letter-spacing:0.25px;color:#3c3732">9.00</div><div class="t" style="left:190.2px;top:384px;font-size:13px;letter-spacing:0.25px;color:#3c3732">9.00</div><div class="t" style="left:243.8px;top:384px;font-size:13px;letter-spacing:0.25px;color:#3c3732">9.00</div><div class="t" style="left:296.9px;top:384px;font-size:13px;letter-spacing:0.25px;color:#3c3732">9.00</div><div class="t" style="left:350.0px;top:384px;font-size:13px;letter-spacing:0.25px;color:#3c3732">9.00</div><div class="t" style="left:403.1px;top:384px;font-size:13px;letter-spacing:0.25px;color:#3c3732">9.00</div><div class="t" style="left:456.2px;top:384px;font-size:13px;letter-spacing:0.25px;color:#3c3732">9.00</div><div class="t" style="left:508.9px;top:384px;font-size:13px;letter-spacing:0.25px;color:#3c3732">9.00</div><div class="t" style="left:562.3px;top:384px;font-size:13px;letter-spacing:0.25px;color:#3c3732">9.00</div><div class="t" style="left:615.3px;top:384px;font-size:13px;letter-spacing:0.25px;color:#3c3732">9.00</div><div class="t" style="left:668.0px;top:384px;font-size:13px;letter-spacing:0.25px;color:#3c3732">9.00</div><div class="t" style="left:720.8px;top:384px;font-size:13px;letter-spacing:0.25px;color:#3c3732">9.00</div><div class="a" style="left:74px;top:403px;width:684px;height:25px;background:linear-gradient(#f1ecdf,#ede6d3 50%,#f0ebdd)"></div><div class="a" style="left:0;top:403px;width:73px;height:23px;background:linear-gradient(#8a7a6e,#6e5f55 55%,#5d4f46)"></div><div class="t" style="left:11px;top:409.5px;font-size:12.5px;color:#f4efe9;-webkit-text-stroke:0.3px #f4efe9;text-shadow:0 0 2px rgba(0,0,0,.45)">FLRB3S</div><div class="t" style="left:83.5px;top:409px;font-size:13px;letter-spacing:0.25px;color:#3c3732">0.00</div><div class="t" style="left:136.6px;top:409px;font-size:13px;letter-spacing:0.25px;color:#3c3732">0.00</div><div class="t" style="left:190.2px;top:409px;font-size:13px;letter-spacing:0.25px;color:#3c3732">0.00</div><div class="t" style="left:243.8px;top:409px;font-size:13px;letter-spacing:0.25px;color:#3c3732">0.00</div><div class="t" style="left:296.9px;top:409px;font-size:13px;letter-spacing:0.25px;color:#3c3732">0.00</div><div class="t" style="left:350.0px;top:409px;font-size:13px;letter-spacing:0.25px;color:#3c3732">0.00</div><div class="t" style="left:403.1px;top:409px;font-size:13px;letter-spacing:0.25px;color:#3c3732">0.00</div><div class="t" style="left:456.2px;top:409px;font-size:13px;letter-spacing:0.25px;color:#3c3732">0.00</div><div class="t" style="left:508.9px;top:409px;font-size:13px;letter-spacing:0.25px;color:#3c3732">0.00</div><div class="t" style="left:562.3px;top:409px;font-size:13px;letter-spacing:0.25px;color:#3c3732">0.00</div><div class="t" style="left:615.3px;top:409px;font-size:13px;letter-spacing:0.25px;color:#3c3732">0.00</div><div class="t" style="left:668.0px;top:409px;font-size:13px;letter-spacing:0.25px;color:#3c3732">0.00</div><div class="t" style="left:720.8px;top:409px;font-size:13px;letter-spacing:0.25px;color:#3c3732">0.00</div><div class="a" style="left:74px;top:428px;width:684px;height:25px;background:linear-gradient(#fbfaf7,#f7f5ef)"></div><div class="a" style="left:0;top:428px;width:73px;height:23px;background:linear-gradient(#8a7a6e,#6e5f55 55%,#5d4f46)"></div><div class="t" style="left:11px;top:434.5px;font-size:12.5px;color:#f4efe9;-webkit-text-stroke:0.3px #f4efe9;text-shadow:0 0 2px rgba(0,0,0,.45)">FLRB4</div><div class="t" style="left:83.5px;top:434px;font-size:13px;letter-spacing:0.25px;color:#3c3732">9.00</div><div class="t" style="left:136.6px;top:434px;font-size:13px;letter-spacing:0.25px;color:#3c3732">9.00</div><div class="t" style="left:190.2px;top:434px;font-size:13px;letter-spacing:0.25px;color:#3c3732">9.00</div><div class="t" style="left:243.8px;top:434px;font-size:13px;letter-spacing:0.25px;color:#3c3732">9.00</div><div class="t" style="left:296.9px;top:434px;font-size:13px;letter-spacing:0.25px;color:#3c3732">9.00</div><div class="t" style="left:350.0px;top:434px;font-size:13px;letter-spacing:0.25px;color:#3c3732">9.00</div><div class="t" style="left:403.1px;top:434px;font-size:13px;letter-spacing:0.25px;color:#3c3732">9.00</div><div class="t" style="left:456.2px;top:434px;font-size:13px;letter-spacing:0.25px;color:#3c3732">9.00</div><div class="t" style="left:508.9px;top:434px;font-size:13px;letter-spacing:0.25px;color:#3c3732">9.00</div><div class="t" style="left:562.3px;top:434px;font-size:13px;letter-spacing:0.25px;color:#3c3732">9.00</div><div class="t" style="left:615.3px;top:434px;font-size:13px;letter-spacing:0.25px;color:#3c3732">9.00</div><div class="t" style="left:668.0px;top:434px;font-size:13px;letter-spacing:0.25px;color:#3c3732">9.00</div><div class="t" style="left:720.8px;top:434px;font-size:13px;letter-spacing:0.25px;color:#3c3732">9.00</div><div class="a" style="left:74px;top:453px;width:684px;height:25px;background:linear-gradient(#f1ecdf,#ede6d3 50%,#f0ebdd)"></div><div class="a" style="left:0;top:453px;width:73px;height:23px;background:linear-gradient(#8a7a6e,#6e5f55 55%,#5d4f46)"></div><div class="t" style="left:11px;top:459.5px;font-size:12.5px;color:#f4efe9;-webkit-text-stroke:0.3px #f4efe9;text-shadow:0 0 2px rgba(0,0,0,.45)">FLRB4L</div><div class="t" style="left:83.5px;top:459px;font-size:13px;letter-spacing:0.25px;color:#3c3732">9.00</div><div class="t" style="left:136.6px;top:459px;font-size:13px;letter-spacing:0.25px;color:#3c3732">9.00</div><div class="t" style="left:190.2px;top:459px;font-size:13px;letter-spacing:0.25px;color:#3c3732">9.00</div><div class="t" style="left:243.8px;top:459px;font-size:13px;letter-spacing:0.25px;color:#3c3732">9.00</div><div class="t" style="left:296.9px;top:459px;font-size:13px;letter-spacing:0.25px;color:#3c3732">9.00</div><div class="t" style="left:350.0px;top:459px;font-size:13px;letter-spacing:0.25px;color:#3c3732">9.00</div><div class="t" style="left:403.1px;top:459px;font-size:13px;letter-spacing:0.25px;color:#3c3732">9.00</div><div class="t" style="left:456.2px;top:459px;font-size:13px;letter-spacing:0.25px;color:#3c3732">9.00</div><div class="t" style="left:508.9px;top:459px;font-size:13px;letter-spacing:0.25px;color:#3c3732">9.00</div><div class="t" style="left:562.3px;top:459px;font-size:13px;letter-spacing:0.25px;color:#3c3732">9.00</div><div class="t" style="left:615.3px;top:459px;font-size:13px;letter-spacing:0.25px;color:#3c3732">9.00</div><div class="t" style="left:668.0px;top:459px;font-size:13px;letter-spacing:0.25px;color:#3c3732">9.00</div><div class="t" style="left:720.8px;top:459px;font-size:13px;letter-spacing:0.25px;color:#3c3732">9.00</div><div class="a" style="left:74px;top:478px;width:684px;height:25px;background:linear-gradient(#fbfaf7,#f7f5ef)"></div><div class="a" style="left:0;top:478px;width:73px;height:23px;background:linear-gradient(#8a7a6e,#6e5f55 55%,#5d4f46)"></div><div class="t" style="left:11px;top:484.5px;font-size:12.5px;color:#f4efe9;-webkit-text-stroke:0.3px #f4efe9;text-shadow:0 0 2px rgba(0,0,0,.45)">FLRB4S</div><div class="t" style="left:83.5px;top:484px;font-size:13px;letter-spacing:0.25px;color:#3c3732">8.90</div><div class="t" style="left:136.6px;top:484px;font-size:13px;letter-spacing:0.25px;color:#3c3732">8.90</div><div class="t" style="left:190.2px;top:484px;font-size:13px;letter-spacing:0.25px;color:#3c3732">8.90</div><div class="t" style="left:243.8px;top:484px;font-size:13px;letter-spacing:0.25px;color:#3c3732">8.90</div><div class="t" style="left:296.9px;top:484px;font-size:13px;letter-spacing:0.25px;color:#3c3732">8.90</div><div class="t" style="left:350.0px;top:484px;font-size:13px;letter-spacing:0.25px;color:#3c3732">8.90</div><div class="t" style="left:403.1px;top:484px;font-size:13px;letter-spacing:0.25px;color:#3c3732">8.90</div><div class="t" style="left:456.2px;top:484px;font-size:13px;letter-spacing:0.25px;color:#3c3732">8.90</div><div class="t" style="left:508.9px;top:484px;font-size:13px;letter-spacing:0.25px;color:#3c3732">8.90</div><div class="t" style="left:562.3px;top:484px;font-size:13px;letter-spacing:0.25px;color:#3c3732">8.90</div><div class="t" style="left:615.3px;top:484px;font-size:13px;letter-spacing:0.25px;color:#3c3732">8.90</div><div class="t" style="left:668.0px;top:484px;font-size:13px;letter-spacing:0.25px;color:#3c3732">8.90</div><div class="t" style="left:720.8px;top:484px;font-size:13px;letter-spacing:0.25px;color:#3c3732">8.90</div><div class="a" style="left:74px;top:503px;width:684px;height:25px;background:linear-gradient(#f1ecdf,#ede6d3 50%,#f0ebdd)"></div><div class="a" style="left:0;top:503px;width:73px;height:23px;background:linear-gradient(#8a7a6e,#6e5f55 55%,#5d4f46)"></div><div class="t" style="left:11px;top:509.5px;font-size:12.5px;color:#f4efe9;-webkit-text-stroke:0.3px #f4efe9;text-shadow:0 0 2px rgba(0,0,0,.45)">FLSBB</div><div class="t" style="left:83.5px;top:509px;font-size:13px;letter-spacing:0.25px;color:#3c3732">4.50</div><div class="t" style="left:136.6px;top:509px;font-size:13px;letter-spacing:0.25px;color:#3c3732">4.50</div><div class="t" style="left:190.2px;top:509px;font-size:13px;letter-spacing:0.25px;color:#3c3732">4.50</div><div class="t" style="left:243.8px;top:509px;font-size:13px;letter-spacing:0.25px;color:#3c3732">4.50</div><div class="t" style="left:296.9px;top:509px;font-size:13px;letter-spacing:0.25px;color:#3c3732">4.50</div><div class="t" style="left:350.0px;top:509px;font-size:13px;letter-spacing:0.25px;color:#3c3732">4.50</div><div class="t" style="left:403.1px;top:509px;font-size:13px;letter-spacing:0.25px;color:#3c3732">4.50</div><div class="t" style="left:456.2px;top:509px;font-size:13px;letter-spacing:0.25px;color:#3c3732">4.50</div><div class="t" style="left:508.9px;top:509px;font-size:13px;letter-spacing:0.25px;color:#3c3732">4.50</div><div class="t" style="left:562.3px;top:509px;font-size:13px;letter-spacing:0.25px;color:#3c3732">4.50</div><div class="t" style="left:615.3px;top:509px;font-size:13px;letter-spacing:0.25px;color:#3c3732">4.50</div><div class="t" style="left:668.0px;top:509px;font-size:13px;letter-spacing:0.25px;color:#3c3732">4.50</div><div class="t" style="left:720.8px;top:509px;font-size:13px;letter-spacing:0.25px;color:#3c3732">4.50</div><div class="a" style="left:74px;top:528px;width:684px;height:25px;background:linear-gradient(#fbfaf7,#f7f5ef)"></div><div class="a" style="left:0;top:528px;width:73px;height:23px;background:linear-gradient(#8a7a6e,#6e5f55 55%,#5d4f46)"></div><div class="t" style="left:11px;top:534.5px;font-size:12.5px;color:#f4efe9;-webkit-text-stroke:0.3px #f4efe9;text-shadow:0 0 2px rgba(0,0,0,.45)">G</div><div class="t" style="left:83.5px;top:534px;font-size:13px;letter-spacing:0.25px;color:#3c3732">10.50</div><div class="t" style="left:136.6px;top:534px;font-size:13px;letter-spacing:0.25px;color:#3c3732">10.50</div><div class="t" style="left:190.2px;top:534px;font-size:13px;letter-spacing:0.25px;color:#3c3732">10.50</div><div class="t" style="left:243.8px;top:534px;font-size:13px;letter-spacing:0.25px;color:#3c3732">10.50</div><div class="t" style="left:296.9px;top:534px;font-size:13px;letter-spacing:0.25px;color:#3c3732">10.50</div><div class="t" style="left:350.0px;top:534px;font-size:13px;letter-spacing:0.25px;color:#3c3732">10.50</div><div class="t" style="left:403.1px;top:534px;font-size:13px;letter-spacing:0.25px;color:#3c3732">10.50</div><div class="t" style="left:456.2px;top:534px;font-size:13px;letter-spacing:0.25px;color:#3c3732">10.50</div><div class="t" style="left:508.9px;top:534px;font-size:13px;letter-spacing:0.25px;color:#3c3732">10.50</div><div class="t" style="left:562.3px;top:534px;font-size:13px;letter-spacing:0.25px;color:#3c3732">10.50</div><div class="t" style="left:615.3px;top:534px;font-size:13px;letter-spacing:0.25px;color:#3c3732">10.50</div><div class="t" style="left:668.0px;top:534px;font-size:13px;letter-spacing:0.25px;color:#3c3732">10.50</div><div class="t" style="left:720.8px;top:534px;font-size:13px;letter-spacing:0.25px;color:#3c3732">10.50</div><div class="a" style="left:74px;top:553px;width:684px;height:25px;background:linear-gradient(#f1ecdf,#ede6d3 50%,#f0ebdd)"></div><div class="a" style="left:0;top:553px;width:73px;height:23px;background:linear-gradient(#8a7a6e,#6e5f55 55%,#5d4f46)"></div><div class="t" style="left:11px;top:559.5px;font-size:12.5px;color:#f4efe9;-webkit-text-stroke:0.3px #f4efe9;text-shadow:0 0 2px rgba(0,0,0,.45)">GPDJ</div><div class="t" style="left:83.5px;top:559px;font-size:13px;letter-spacing:0.25px;color:#3c3732">4.50</div><div class="t" style="left:136.6px;top:559px;font-size:13px;letter-spacing:0.25px;color:#3c3732">4.50</div><div class="t" style="left:190.2px;top:559px;font-size:13px;letter-spacing:0.25px;color:#3c3732">4.50</div><div class="t" style="left:243.8px;top:559px;font-size:13px;letter-spacing:0.25px;color:#3c3732">4.50</div><div class="t" style="left:296.9px;top:559px;font-size:13px;letter-spacing:0.25px;color:#3c3732">4.50</div><div class="t" style="left:350.0px;top:559px;font-size:13px;letter-spacing:0.25px;color:#3c3732">4.50</div><div class="t" style="left:403.1px;top:559px;font-size:13px;letter-spacing:0.25px;color:#3c3732">4.50</div><div class="t" style="left:456.2px;top:559px;font-size:13px;letter-spacing:0.25px;color:#3c3732">4.50</div><div class="t" style="left:508.9px;top:559px;font-size:13px;letter-spacing:0.25px;color:#3c3732">4.50</div><div class="t" style="left:562.3px;top:559px;font-size:13px;letter-spacing:0.25px;color:#3c3732">4.50</div><div class="t" style="left:615.3px;top:559px;font-size:13px;letter-spacing:0.25px;color:#3c3732">4.50</div><div class="t" style="left:668.0px;top:559px;font-size:13px;letter-spacing:0.25px;color:#3c3732">4.50</div><div class="t" style="left:720.8px;top:559px;font-size:13px;letter-spacing:0.25px;color:#3c3732">4.50</div><div class="a" style="left:74px;top:578px;width:684px;height:25px;background:linear-gradient(#fbfaf7,#f7f5ef)"></div><div class="a" style="left:0;top:578px;width:73px;height:23px;background:linear-gradient(#8a7a6e,#6e5f55 55%,#5d4f46)"></div><div class="t" style="left:11px;top:584.5px;font-size:12.5px;color:#f4efe9;-webkit-text-stroke:0.3px #f4efe9;text-shadow:0 0 2px rgba(0,0,0,.45)">GR</div><div class="t" style="left:83.5px;top:584px;font-size:13px;letter-spacing:0.25px;color:#3c3732">0.00</div><div class="t" style="left:136.6px;top:584px;font-size:13px;letter-spacing:0.25px;color:#3c3732">0.00</div><div class="t" style="left:190.2px;top:584px;font-size:13px;letter-spacing:0.25px;color:#3c3732">0.00</div><div class="t" style="left:243.8px;top:584px;font-size:13px;letter-spacing:0.25px;color:#3c3732">0.00</div><div class="t" style="left:296.9px;top:584px;font-size:13px;letter-spacing:0.25px;color:#3c3732">0.00</div><div class="t" style="left:350.0px;top:584px;font-size:13px;letter-spacing:0.25px;color:#3c3732">0.00</div><div class="t" style="left:403.1px;top:584px;font-size:13px;letter-spacing:0.25px;color:#3c3732">0.00</div><div class="t" style="left:456.2px;top:584px;font-size:13px;letter-spacing:0.25px;color:#3c3732">0.00</div><div class="t" style="left:508.9px;top:584px;font-size:13px;letter-spacing:0.25px;color:#3c3732">0.00</div><div class="t" style="left:562.3px;top:584px;font-size:13px;letter-spacing:0.25px;color:#3c3732">0.00</div><div class="t" style="left:615.3px;top:584px;font-size:13px;letter-spacing:0.25px;color:#3c3732">0.00</div><div class="t" style="left:668.0px;top:584px;font-size:13px;letter-spacing:0.25px;color:#3c3732">0.00</div><div class="t" style="left:720.8px;top:584px;font-size:13px;letter-spacing:0.25px;color:#3c3732">0.00</div><div class="a" style="left:74px;top:603px;width:684px;height:25px;background:linear-gradient(#f1ecdf,#ede6d3 50%,#f0ebdd)"></div><div class="a" style="left:0;top:603px;width:73px;height:23px;background:linear-gradient(#8a7a6e,#6e5f55 55%,#5d4f46)"></div><div class="t" style="left:11px;top:609.5px;font-size:12.5px;color:#f4efe9;-webkit-text-stroke:0.3px #f4efe9;text-shadow:0 0 2px rgba(0,0,0,.45)">GRS</div><div class="t" style="left:83.5px;top:609px;font-size:13px;letter-spacing:0.25px;color:#3c3732">0.00</div><div class="t" style="left:136.6px;top:609px;font-size:13px;letter-spacing:0.25px;color:#3c3732">0.00</div><div class="t" style="left:190.2px;top:609px;font-size:13px;letter-spacing:0.25px;color:#3c3732">0.00</div><div class="t" style="left:243.8px;top:609px;font-size:13px;letter-spacing:0.25px;color:#3c3732">0.00</div><div class="t" style="left:296.9px;top:609px;font-size:13px;letter-spacing:0.25px;color:#3c3732">0.00</div><div class="t" style="left:350.0px;top:609px;font-size:13px;letter-spacing:0.25px;color:#3c3732">0.00</div><div class="t" style="left:403.1px;top:609px;font-size:13px;letter-spacing:0.25px;color:#3c3732">0.00</div><div class="t" style="left:456.2px;top:609px;font-size:13px;letter-spacing:0.25px;color:#3c3732">0.00</div><div class="t" style="left:508.9px;top:609px;font-size:13px;letter-spacing:0.25px;color:#3c3732">0.00</div><div class="t" style="left:562.3px;top:609px;font-size:13px;letter-spacing:0.25px;color:#3c3732">0.00</div><div class="t" style="left:615.3px;top:609px;font-size:13px;letter-spacing:0.25px;color:#3c3732">0.00</div><div class="t" style="left:668.0px;top:609px;font-size:13px;letter-spacing:0.25px;color:#3c3732">0.00</div><div class="t" style="left:720.8px;top:609px;font-size:13px;letter-spacing:0.25px;color:#3c3732">0.00</div><div class="a" style="left:74px;top:628px;width:684px;height:25px;background:linear-gradient(#fbfaf7,#f7f5ef)"></div><div class="a" style="left:0;top:628px;width:73px;height:23px;background:linear-gradient(#8a7a6e,#6e5f55 55%,#5d4f46)"></div><div class="a" style="left:4px;top:628px;width:43px;height:22px;background:rgba(122,118,0,.8);filter:blur(1px)"></div><div class="t" style="left:11px;top:634.5px;font-size:12.5px;color:#eeec50;-webkit-text-stroke:0.3px #eeec50;text-shadow:0 0 2px rgba(0,0,0,.45)">HS1</div><div class="t" style="left:83.5px;top:634px;font-size:13px;letter-spacing:0.25px;color:#3c3732">5.00</div><div class="t" style="left:136.6px;top:634px;font-size:13px;letter-spacing:0.25px;color:#3c3732">5.00</div><div class="t" style="left:190.2px;top:634px;font-size:13px;letter-spacing:0.25px;color:#3c3732">5.00</div><div class="t" style="left:243.8px;top:634px;font-size:13px;letter-spacing:0.25px;color:#3c3732">5.00</div><div class="t" style="left:296.9px;top:634px;font-size:13px;letter-spacing:0.25px;color:#3c3732">5.00</div><div class="t" style="left:350.0px;top:634px;font-size:13px;letter-spacing:0.25px;color:#3c3732">5.00</div><div class="t" style="left:403.1px;top:634px;font-size:13px;letter-spacing:0.25px;color:#3c3732">5.00</div><div class="t" style="left:456.2px;top:634px;font-size:13px;letter-spacing:0.25px;color:#3c3732">5.00</div><div class="t" style="left:508.9px;top:634px;font-size:13px;letter-spacing:0.25px;color:#3c3732">5.00</div><div class="t" style="left:562.3px;top:634px;font-size:13px;letter-spacing:0.25px;color:#3c3732">5.00</div><div class="t" style="left:615.3px;top:634px;font-size:13px;letter-spacing:0.25px;color:#3c3732">5.00</div><div class="t" style="left:668.0px;top:634px;font-size:13px;letter-spacing:0.25px;color:#3c3732">5.00</div><div class="t" style="left:720.8px;top:634px;font-size:13px;letter-spacing:0.25px;color:#3c3732">5.00</div><div class="a" style="left:74px;top:653px;width:684px;height:25px;background:linear-gradient(#f1ecdf,#ede6d3 50%,#f0ebdd)"></div><div class="a" style="left:0;top:653px;width:73px;height:23px;background:linear-gradient(#8a7a6e,#6e5f55 55%,#5d4f46)"></div><div class="a" style="left:0;top:653px;width:62px;height:21px;background:rgba(122,118,0,.8);filter:blur(1px)"></div><div class="t" style="left:11px;top:659.5px;font-size:12.5px;color:#eeec50;-webkit-text-stroke:0.3px #eeec50;text-shadow:0 0 2px rgba(0,0,0,.45)">HS3</div><div class="t" style="left:83.5px;top:659px;font-size:13px;letter-spacing:0.25px;color:#3c3732">5.00</div><div class="t" style="left:136.6px;top:659px;font-size:13px;letter-spacing:0.25px;color:#3c3732">5.00</div><div class="t" style="left:190.2px;top:659px;font-size:13px;letter-spacing:0.25px;color:#3c3732">5.00</div><div class="t" style="left:243.8px;top:659px;font-size:13px;letter-spacing:0.25px;color:#3c3732">5.00</div><div class="t" style="left:296.9px;top:659px;font-size:13px;letter-spacing:0.25px;color:#3c3732">5.00</div><div class="t" style="left:350.0px;top:659px;font-size:13px;letter-spacing:0.25px;color:#3c3732">5.00</div><div class="t" style="left:403.1px;top:659px;font-size:13px;letter-spacing:0.25px;color:#3c3732">5.00</div><div class="t" style="left:456.2px;top:659px;font-size:13px;letter-spacing:0.25px;color:#3c3732">5.00</div><div class="t" style="left:508.9px;top:659px;font-size:13px;letter-spacing:0.25px;color:#3c3732">5.00</div><div class="t" style="left:562.3px;top:659px;font-size:13px;letter-spacing:0.25px;color:#3c3732">5.00</div><div class="t" style="left:615.3px;top:659px;font-size:13px;letter-spacing:0.25px;color:#3c3732">5.00</div><div class="t" style="left:668.0px;top:659px;font-size:13px;letter-spacing:0.25px;color:#3c3732">5.00</div><div class="t" style="left:720.8px;top:659px;font-size:13px;letter-spacing:0.25px;color:#3c3732">5.00</div><div class="a" style="left:74px;top:678px;width:684px;height:25px;background:linear-gradient(#fbfaf7,#f7f5ef)"></div><div class="a" style="left:0;top:678px;width:73px;height:23px;background:linear-gradient(#8a7a6e,#6e5f55 55%,#5d4f46)"></div><div class="a" style="left:0;top:678px;width:73px;height:22px;background:rgba(122,118,0,.8);filter:blur(1px)"></div><div class="t" style="left:11px;top:684.5px;font-size:12.5px;color:#eeec50;-webkit-text-stroke:0.3px #eeec50;text-shadow:0 0 2px rgba(0,0,0,.45)">IBISPORT</div><div class="t" style="left:83.5px;top:684px;font-size:13px;letter-spacing:0.25px;color:#3c3732">10.00</div><div class="t" style="left:136.6px;top:684px;font-size:13px;letter-spacing:0.25px;color:#3c3732">10.00</div><div class="t" style="left:190.2px;top:684px;font-size:13px;letter-spacing:0.25px;color:#3c3732">10.00</div><div class="t" style="left:243.8px;top:684px;font-size:13px;letter-spacing:0.25px;color:#3c3732">10.00</div><div class="t" style="left:296.9px;top:684px;font-size:13px;letter-spacing:0.25px;color:#3c3732">10.00</div><div class="t" style="left:350.0px;top:684px;font-size:13px;letter-spacing:0.25px;color:#3c3732">10.00</div><div class="t" style="left:403.1px;top:684px;font-size:13px;letter-spacing:0.25px;color:#3c3732">10.00</div><div class="t" style="left:456.2px;top:684px;font-size:13px;letter-spacing:0.25px;color:#3c3732">10.00</div><div class="t" style="left:508.9px;top:684px;font-size:13px;letter-spacing:0.25px;color:#3c3732">10.00</div><div class="t" style="left:562.3px;top:684px;font-size:13px;letter-spacing:0.25px;color:#3c3732">10.00</div><div class="t" style="left:615.3px;top:684px;font-size:13px;letter-spacing:0.25px;color:#3c3732">10.00</div><div class="t" style="left:668.0px;top:684px;font-size:13px;letter-spacing:0.25px;color:#3c3732">10.00</div><div class="t" style="left:720.8px;top:684px;font-size:13px;letter-spacing:0.25px;color:#3c3732">10.00</div><div class="a" style="left:74px;top:703px;width:684px;height:25px;background:linear-gradient(#f1ecdf,#ede6d3 50%,#f0ebdd)"></div><div class="a" style="left:0;top:703px;width:73px;height:23px;background:linear-gradient(#8a7a6e,#6e5f55 55%,#5d4f46)"></div><div class="t" style="left:11px;top:709.5px;font-size:12.5px;color:#f4efe9;-webkit-text-stroke:0.3px #f4efe9;text-shadow:0 0 2px rgba(0,0,0,.45)">IBA16</div><div class="t" style="left:83.5px;top:709px;font-size:13px;letter-spacing:0.25px;color:#3c3732">10.45</div><div class="t" style="left:136.6px;top:709px;font-size:13px;letter-spacing:0.25px;color:#3c3732">10.45</div><div class="t" style="left:190.2px;top:709px;font-size:13px;letter-spacing:0.25px;color:#3c3732">10.45</div><div class="t" style="left:243.8px;top:709px;font-size:13px;letter-spacing:0.25px;color:#3c3732">10.45</div><div class="t" style="left:296.9px;top:709px;font-size:13px;letter-spacing:0.25px;color:#3c3732">10.45</div><div class="t" style="left:350.0px;top:709px;font-size:13px;letter-spacing:0.25px;color:#3c3732">10.45</div><div class="t" style="left:403.1px;top:709px;font-size:13px;letter-spacing:0.25px;color:#3c3732">10.45</div><div class="t" style="left:456.2px;top:709px;font-size:13px;letter-spacing:0.25px;color:#3c3732">10.45</div><div class="t" style="left:508.9px;top:709px;font-size:13px;letter-spacing:0.25px;color:#3c3732">10.45</div><div class="t" style="left:562.3px;top:709px;font-size:13px;letter-spacing:0.25px;color:#3c3732">10.45</div><div class="t" style="left:615.3px;top:709px;font-size:13px;letter-spacing:0.25px;color:#3c3732">10.45</div><div class="t" style="left:668.0px;top:709px;font-size:13px;letter-spacing:0.25px;color:#3c3732">10.45</div><div class="t" style="left:720.8px;top:709px;font-size:13px;letter-spacing:0.25px;color:#3c3732">10.45</div><div class="a" style="left:126px;top:28px;width:1px;height:700px;background:rgba(150,140,120,.28)"></div><div class="a" style="left:180px;top:28px;width:1px;height:700px;background:rgba(150,140,120,.28)"></div><div class="a" style="left:234px;top:28px;width:1px;height:700px;background:rgba(150,140,120,.28)"></div><div class="a" style="left:287px;top:28px;width:1px;height:700px;background:rgba(150,140,120,.28)"></div><div class="a" style="left:340px;top:28px;width:1px;height:700px;background:rgba(150,140,120,.28)"></div><div class="a" style="left:393px;top:28px;width:1px;height:700px;background:rgba(150,140,120,.28)"></div><div class="a" style="left:446px;top:28px;width:1px;height:700px;background:rgba(150,140,120,.28)"></div><div class="a" style="left:499px;top:28px;width:1px;height:700px;background:rgba(150,140,120,.28)"></div><div class="a" style="left:552px;top:28px;width:1px;height:700px;background:rgba(150,140,120,.28)"></div><div class="a" style="left:605px;top:28px;width:1px;height:700px;background:rgba(150,140,120,.28)"></div><div class="a" style="left:658px;top:28px;width:1px;height:700px;background:rgba(150,140,120,.28)"></div><div class="a" style="left:710px;top:28px;width:1px;height:700px;background:rgba(150,140,120,.28)"></div><div class="a" style="left:764px;top:28px;width:1px;height:700px;background:rgba(150,140,120,.28)"></div></div><div class="a" style="left:760px;top:32px;width:0;height:0;border-left:4px solid transparent;border-right:4px solid transparent;border-bottom:6px solid #c8c8c8"></div><div class="a" style="left:761px;top:154px;width:6px;height:265px;border-radius:3px;background:#8c8c8c"></div><div class="a" style="left:760px;top:701px;width:0;height:0;border-left:4px solid transparent;border-right:4px solid transparent;border-top:6px solid #c8c8c8"></div><div class="a" style="left:0;top:713px;width:771px;height:12px;background:#fff"></div><div class="a" style="left:4px;top:715px;width:0;height:0;border-top:4px solid transparent;border-bottom:4px solid transparent;border-right:6px solid #c0c0c8"></div><div class="a" style="left:18px;top:716px;width:669px;height:6px;border-radius:3px;background:#8a8d93"></div><div class="a" style="left:747px;top:715px;width:0;height:0;border-top:4px solid transparent;border-bottom:4px solid transparent;border-left:6px solid #c8c8c8"></div></div><div class="a" style="left:491px;top:250px;width:6px;height:26px;background:#eeee10;filter:blur(0.8px)"></div><div class="a" style="left:831px;top:880px;width:100px;height:20.5px;border-radius:3px;background:linear-gradient(#8b8077,#6e625a 45%,#5f544c 60%,#8a8078);box-shadow:0 1px 1px rgba(0,0,0,.2)"></div><div class="t" style="left:831px;top:885px;width:100px;text-align:center;font-size:11px;color:#efe8e0">Quit</div></body></html>
